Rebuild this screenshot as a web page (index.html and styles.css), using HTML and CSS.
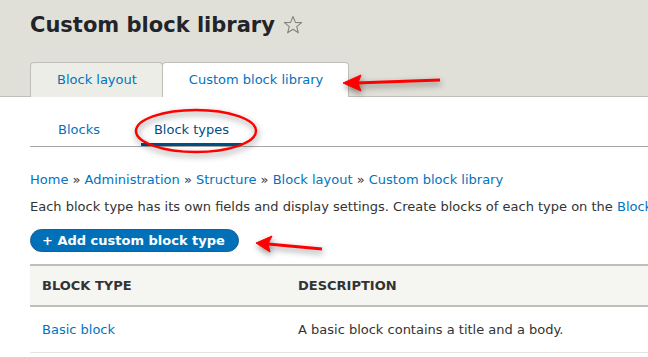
FILE: index.html
```html
<!DOCTYPE html>
<html lang="en">
<head>
  <meta charset="UTF-8" />
  <title>Custom block library</title>
  <link rel="stylesheet" href="styles.css">
</head>
<body>
  <header class="page-header">
    <h1 class="page-title">Custom block library
      <svg class="star" viewBox="0 0 20 20" width="20" height="20"><polygon points="10,1.5 12.4,7.4 18.6,7.6 13.7,11.6 15.4,17.8 10,14.2 4.6,17.8 6.3,11.6 1.4,7.6 7.6,7.4" fill="none" stroke="#85847d" stroke-width="1.1" stroke-linejoin="round"/></svg>
    </h1>
    <ul class="tabs-primary">
      <li class="tab"><a href="#">Block layout</a></li>
      <li class="tab is-active"><a href="#">Custom block library</a></li>
    </ul>
  </header>

  <ul class="tabs-secondary">
    <li class="sub-tab"><a href="#">Blocks</a></li>
    <li class="sub-tab is-active"><a href="#">Block types</a></li>
  </ul>

  <main class="content">
    <nav class="breadcrumb">
      <a href="#">Home</a> » <a href="#">Administration</a> » <a href="#">Structure</a> » <a href="#">Block layout</a> » <a href="#">Custom block library</a>
    </nav>
    <p class="help">Each block type has its own fields and display settings. Create blocks of each type on the <a href="#">Blocks</a> page.</p>
    <a class="action-button" href="#">+ Add custom block type</a>

    <table class="block-types">
      <thead>
        <tr><th class="col-type">Block type</th><th>Description</th><th>Operations</th></tr>
      </thead>
      <tbody>
        <tr><td><a href="#">Basic block</a></td><td>A basic block contains a title and a body.</td><td>Edit</td></tr>
      </tbody>
    </table>
  </main>

  <!-- screenshot annotations -->
  <svg class="annotations" width="648" height="357" viewBox="0 0 648 357">
    <g fill="#f00" stroke="#f00" class="marks">
      <line x1="440" y1="80" x2="356" y2="83" stroke-width="3" />
      <polygon points="343,83 361,75 358,83 361,91" stroke-width="1" stroke-linejoin="round" />
      <line x1="322" y1="249" x2="268" y2="244" stroke-width="3" />
      <polygon points="256,243 272,236 268,244 270,252" stroke-width="1" stroke-linejoin="round" />
      <ellipse cx="196" cy="131" rx="60" ry="21" fill="none" stroke-width="2.5" />
    </g>
  </svg>
</body>
</html>
```

FILE: styles.css
```css
/* --- Base --- */
html, body {
  margin: 0;
}
body {
  font-family: "DejaVu Sans", sans-serif;
  font-size: 13px;
  color: #333;
  background: #fff;
  position: relative;
  overflow: hidden;
  width: 648px;
  height: 357px;
}
a {
  color: #0074bd;
  text-decoration: none;
}

/* --- Header & primary tabs --- */
.page-header {
  background: #e0e0d8;
  border-bottom: 1px solid #bfbfba;
  padding: 0 30px;
}
.page-title {
  margin: 0;
  padding-top: 11px;
  height: 62px;
  box-sizing: border-box;
  font-size: 21px;
  line-height: 28px;
  font-weight: bold;
  color: #232429;
  display: flex;
  align-items: flex-start;
}
.star {
  margin-left: 8px;
  margin-top: 4px;
}
.tabs-primary {
  list-style: none;
  margin: 0;
  padding: 0;
  display: flex;
  height: 34px;
}
.tab {
  border: 1px solid #bfbfba;
  border-bottom: none;
  border-radius: 4px 4px 0 0;
  background: #ededE8;
  margin-right: -1px;
  margin-bottom: -1px;
}
.tab a {
  display: block;
  padding: 0 25px 0 26px;
  line-height: 34px;
  height: 34px;
}
.tab.is-active {
  background: #fff;
}
.tab.is-active a {
  height: 35px;
}

/* --- Secondary tabs --- */
.tabs-secondary {
  list-style: none;
  margin: 0 0 0 30px;
  padding: 0 0 0 15px;
  display: flex;
  gap: 28px;
  border-bottom: 1px solid #a6a6a6;
  height: 49px;
}
.sub-tab a {
  display: block;
  padding: 0 13px;
  line-height: 20px;
  padding-top: 23px;
  height: 46px;
  box-sizing: border-box;
}
.sub-tab.is-active a {
  color: #004f80;
  border-bottom: 3px solid #004f80;
  height: 49px;
}

/* --- Content --- */
.content {
  padding: 0 0 0 30px;
}
.breadcrumb {
  margin-top: 25px;
  line-height: 16px;
  white-space: nowrap;
}
.help {
  margin: 11px 0 0;
  line-height: 16px;
  white-space: nowrap;
}
.action-button {
  display: inline-block;
  margin-top: 14px;
  background: #0071b8;
  border: 1px solid #1e5c90;
  border-radius: 12px;
  color: #fff;
  font-weight: bold;
  font-size: 13px;
  line-height: 21px;
  padding: 0 13px 0 11px;
}

/* --- Table --- */
.block-types {
  border-collapse: collapse;
  margin-top: 12px;
  width: 900px;
}
.block-types th {
  background: #f5f5f2;
  border-top: 2px solid #bfbfba;
  border-bottom: 2px solid #bfbfba;
  text-align: left;
  text-transform: uppercase;
  font-size: 13px;
  font-weight: bold;
  color: #333;
  padding: 0 12px;
  height: 39px;
}
.block-types .col-type {
  width: 232px;
}
.block-types td {
  padding: 0 12px;
  height: 45px;
  border-bottom: 1px solid #e6e4df;
}

/* --- Annotation overlay --- */
.annotations {
  position: absolute;
  top: 0;
  left: 0;
  pointer-events: none;
}
.marks {
  filter: drop-shadow(1px 3px 3px rgba(0, 0, 0, 0.45));
}
```
